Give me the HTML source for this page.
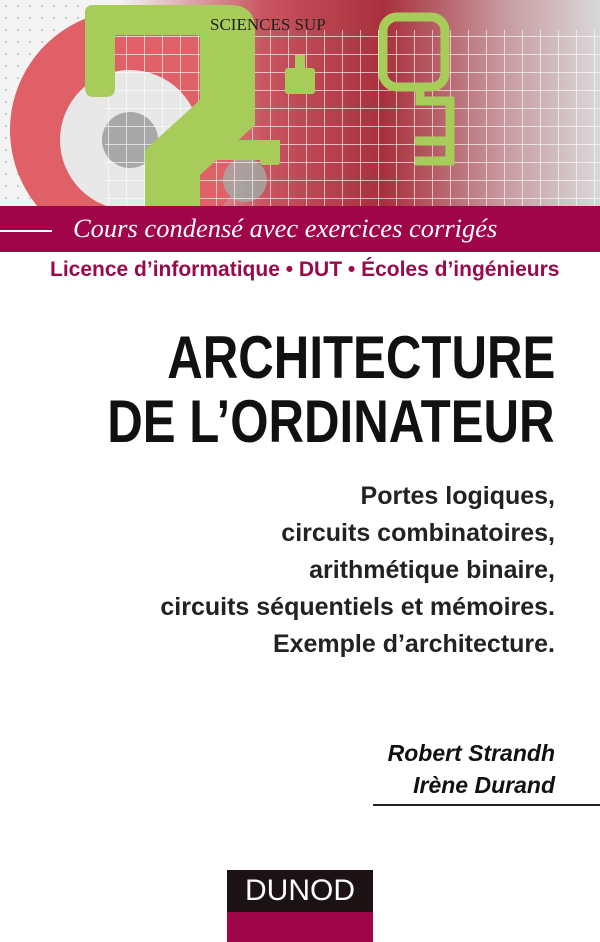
<!DOCTYPE html>
<html><head><meta charset="utf-8"><style>
body{margin:0;width:600px;height:942px;background:#fff;position:relative;overflow:hidden;font-family:"Liberation Sans",sans-serif}
.r{position:absolute;right:45px;text-align:right;white-space:nowrap;font-weight:bold;transform-origin:right center}
</style></head><body>
<svg style="position:absolute;left:0;top:0" width="600" height="206">
<defs><pattern id="g" width="18" height="18" patternUnits="userSpaceOnUse"><path d="M0 0H18M0 0V18" stroke="#fff" stroke-width="1.2" fill="none"/></pattern>
<pattern id="d" width="12" height="12" patternUnits="userSpaceOnUse"><circle cx="6" cy="6" r="1" fill="#bbb"/></pattern>
<linearGradient id="bg" x1="0" x2="1"><stop offset="0" stop-color="#f2f2f2"/><stop offset=".3" stop-color="#c85560"/><stop offset=".55" stop-color="#a8303c"/><stop offset=".8" stop-color="#c89aa0"/><stop offset="1" stop-color="#d8d8d8"/></linearGradient></defs>
<rect width="600" height="206" fill="#f4f4f4"/>
<rect width="600" height="206" fill="url(#d)"/>
<rect x="120" y="0" width="480" height="206" fill="url(#bg)"/>
<circle cx="130" cy="130" r="120" fill="#e06068"/>
<circle cx="130" cy="140" r="70" fill="#e8e8e8"/>
<circle cx="130" cy="140" r="28" fill="#a8a8a8"/>
<circle cx="245" cy="180" r="22" fill="#9ab8b0" opacity=".7"/>
<rect x="105" y="30" width="495" height="176" fill="url(#g)"/>
<path d="M85 12Q85 5 95 5H230Q255 5 255 30V125L200 175V206H145V150L200 100V35H115V88Q115 97 105 97H94Q85 97 85 88Z" fill="#a8cc5a"/>
<rect x="200" y="140" width="80" height="20" fill="#a8cc5a"/>
<rect x="260" y="140" width="20" height="25" rx="3" fill="#a8cc5a"/>
<rect x="295" y="55" width="10" height="20" fill="#a8cc5a"/>
<rect x="285" y="68" width="30" height="26" rx="3" fill="#a8cc5a"/>
<rect x="383" y="17" width="62" height="70" rx="14" fill="none" stroke="#a8cc5a" stroke-width="9"/>
<path d="M420 87v14h30v40h-35M415 141h35v20h-35" fill="none" stroke="#a8cc5a" stroke-width="9"/>
<text x="210" y="30" font-family="Liberation Serif,serif" font-size="17" fill="#222">SCIENCES SUP</text>
</svg>
<div style="position:absolute;left:0;top:206px;width:600px;height:46px;background:#a0054a"></div>
<div style="position:absolute;left:0;top:230px;width:52px;height:2px;background:#fff"></div>
<div style="position:absolute;left:73px;top:213px;color:#fff;font-family:'Liberation Serif',serif;font-style:italic;font-size:26.5px;white-space:nowrap">Cours condensé avec exercices corrigés</div>
<div style="position:absolute;left:50px;top:258px;color:#9a0a4a;font-weight:bold;font-size:21px;white-space:nowrap">Licence d’informatique • DUT • Écoles d’ingénieurs</div>
<div class="r" style="top:328px;font-size:60px;line-height:60px;color:#111;transform:scaleX(.82)">ARCHITECTURE</div>
<div class="r" style="top:392px;font-size:60px;line-height:60px;color:#111;transform:scaleX(.82)">DE L’ORDINATEUR</div>
<div class="r" style="top:478px;font-size:25px;line-height:37px;color:#222">Portes logiques,<br>circuits combinatoires,<br>arithmétique binaire,<br>circuits séquentiels et mémoires.<br>Exemple d’architecture.</div>
<div class="r" style="top:737px;font-size:23px;line-height:32px;font-style:italic;color:#111">Robert Strandh<br>Irène Durand</div>
<div style="position:absolute;left:373px;top:804px;width:227px;height:2px;background:#222"></div>
<div style="position:absolute;left:227px;top:870px;width:146px;height:42px;background:#1c1214;color:#fff;font-family:'Liberation Sans',sans-serif;font-size:30px;text-align:center;line-height:42px">DUNOD</div>
<div style="position:absolute;left:227px;top:912px;width:146px;height:30px;background:#a0054a"></div>
</body></html>
